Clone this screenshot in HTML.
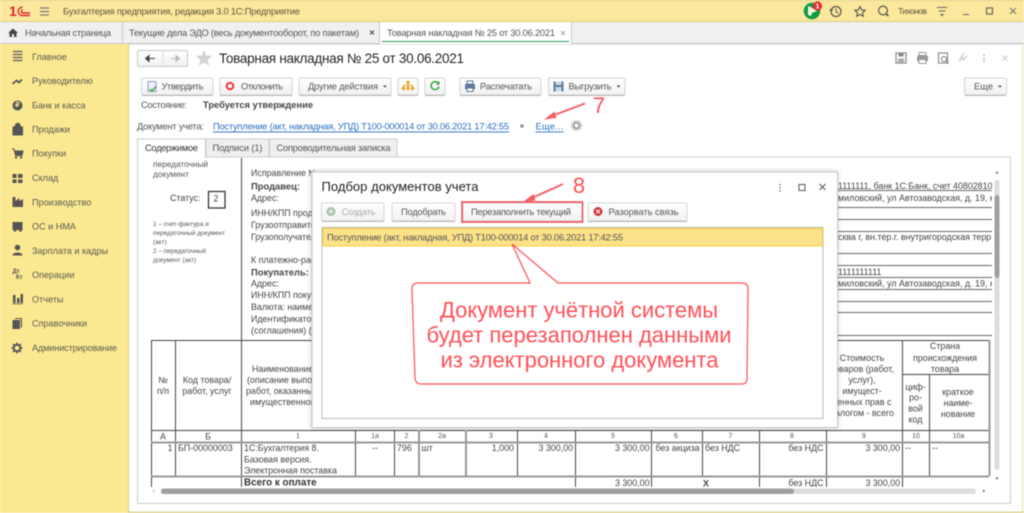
<!DOCTYPE html>
<html><head><meta charset="utf-8"><style>
html,body{margin:0;padding:0;width:1024px;height:513px;overflow:hidden;background:#fff}
body>svg{display:block;filter:blur(.45px)}
text{font-family:"Liberation Sans",sans-serif;font-size:9.3px;fill:#4a4a4a;dominant-baseline:central;white-space:pre}
.s{font-size:9.3px;fill:#555}
.sb{font-size:9.1px;fill:#5a5a50}
.m{text-anchor:middle}.e{text-anchor:end}.b{font-weight:bold}
.d{fill:#444;font-size:8.9px}
.d.b{font-size:9.4px}
.n{font-size:7px;fill:#555;text-anchor:middle}
.sm{font-size:6.4px;fill:#555}
.ln{stroke:#444;stroke-width:1;fill:none}
.g{stroke:#999;stroke-width:2;fill:none}
.ann{fill:#ff5058}
</style></head><body>
<svg width="1024" height="513" viewBox="0 0 1024 513" xmlns="http://www.w3.org/2000/svg">
<defs>
<linearGradient id="bt" x1="0" y1="0" x2="0" y2="1"><stop offset="0" stop-color="#fff"/><stop offset="1" stop-color="#f1f1f1"/></linearGradient>
<filter id="sh" x="-5%" y="-5%" width="110%" height="110%"><feGaussianBlur stdDeviation="2"/></filter>
<clipPath id="rc"><rect x="820" y="170" width="172" height="170"/></clipPath>
</defs>
<!-- top bar -->
<rect width="1024" height="22" fill="#fbe89c"/>
<rect width="1024" height="1" fill="#e0cf7c"/>
<rect y="21" width="1024" height="1" fill="#dccd80"/>
<text x="9" y="11" style="font-size:14px;font-weight:bold;fill:#dc262c">1</text>
<path d="M22.500 7A5 4.500 0 0 0 21 15.500H30M22.500 9.500A3 2.600 0 0 0 22 13H30" fill="none" stroke="#dc262c" stroke-width="1.400"/>
<path d="M40 8h9M40 11.500h9M40 15h9" stroke="#777" stroke-width="1.200"/>
<text x="63" y="11.500" textLength="237" style="fill:#5c5540">Бухгалтерия предприятия, редакция 3.0 1С:Предприятие</text>
<circle cx="812" cy="11" r="8.300" fill="#0f9b45"/>
<path d="M809 6l8 5-5 2-1 3-3-1v-8z" fill="#f4f4d8"/>
<circle cx="817.500" cy="6" r="4.600" fill="#e62a30"/>
<text x="817.500" y="6" class="m b" style="font-size:7.500px;fill:#fff">1</text>
<circle cx="836" cy="11.500" r="5" fill="none" stroke="#555" stroke-width="1.200"/><path d="M836 8.500v3.200l2.300 1.500M829.500 9.500l1.700 1.500 1.500-1.500" fill="none" stroke="#555" stroke-width="1"/>
<path d="M860 6.500l1.600 3.400 3.600.4-2.700 2.400.8 3.600-3.300-1.900-3.300 1.900.8-3.600-2.700-2.400 3.600-.4z" fill="none" stroke="#555" stroke-width="1.100"/>
<circle cx="883" cy="10.500" r="4.400" fill="none" stroke="#555" stroke-width="1.200"/><path d="M886 14l2.500 2" stroke="#555" stroke-width="1.500"/>
<text x="898" y="11" textLength="29" style="font-size:8.500px;fill:#5c5540">Тихонов</text>
<path d="M937 7.500h10M938.500 11h7" stroke="#666" stroke-width="1"/><path d="M940 14h4l-2 2.500z" fill="#666"/>
<path d="M963 14.500h6" stroke="#777" stroke-width="1.200"/>
<rect x="986.500" y="8" width="6" height="6" fill="none" stroke="#666" stroke-width="1.200"/>
<path d="M1010 8l6 6M1016 8l-6 6" stroke="#777" stroke-width="1.100"/>
<!-- tabs -->
<rect y="22" width="1024" height="22" fill="#f0f0f0"/>
<rect y="43" width="1024" height="1.500" fill="#c9c9c9"/>
<path d="M8 33l5-4.500 5 4.500h-1.500v4h-2.500v-3h-2v3h-2.500v-4z" fill="#444"/>
<text x="25" y="33" textLength="86" class="s">Начальная страница</text>
<rect x="122" y="22" width="1" height="22" fill="#c9c9c9"/>
<text x="129" y="33" textLength="230" class="s">Текущие дела ЭДО (весь документооборот, по пакетам)</text>
<path d="M370 30.500l4 4M374 30.500l-4 4" stroke="#555" stroke-width="1.200"/>
<rect x="379" y="22" width="1" height="22" fill="#c9c9c9"/>
<rect x="380" y="22" width="191" height="22" fill="#fff"/>
<text x="387" y="33" textLength="168" class="s">Товарная накладная № 25 от 30.06.2021</text>
<path d="M561 31l4 4M565 31l-4 4" stroke="#aaa" stroke-width="1"/>
<rect x="382" y="41" width="187" height="1" fill="#1f9a5b"/>
<rect x="571" y="22" width="1" height="22" fill="#c9c9c9"/>
<!-- sidebar -->
<rect y="44" width="128.500" height="469" fill="#fbe991"/>
<rect x="128" y="44" width="1" height="469" fill="#dccd80"/>
<path d="M13 51.500h9.500M13 54.500h9.500M13 57.500h9.500M13 60.500h9.500" stroke="#555" stroke-width="1.300"/>
<path d="M12.500 84l4-3.500 2.500 2 3-3" fill="none" stroke="#555" stroke-width="1.800"/>
<circle cx="17.500" cy="105.500" r="5" fill="#555"/><text x="17.500" y="105.500" class="m b" style="font-size:7px;fill:#fbe991">₽</text>
<path d="M13 127h9.500v8h-9.500zM15 127c0-5 5.500-5 5.500 0" fill="#555" stroke="#555"/>
<path d="M12 149h2l1.500 6.500h6.500l1-4.500h-8" fill="#555" stroke="#555"/><circle cx="16" cy="157.500" r="1.200" fill="#555"/><circle cx="21" cy="157.500" r="1.200" fill="#555"/>
<path d="M12.500 174h4v4h-4zM18 174h4.500v4h-4.500zM12.500 179.500h4v3.500h-4zM18 179.500h4.500v3.500h-4.500z" fill="#555"/>
<path d="M12.500 207v-10h3v4l4-3v3l3.500-2v8z" fill="#555"/>
<path d="M12.500 222h10v8h-10zM18 224h4.500" fill="#555"/><circle cx="15" cy="230.500" r="1.300" fill="#555"/><circle cx="20.500" cy="230.500" r="1.300" fill="#555"/>
<circle cx="17.500" cy="247.500" r="2.800" fill="#555"/><path d="M12.500 255.500c0-4 10-4 10 0z" fill="#555"/>
<text x="12.500" y="272" style="font-size:6px;font-weight:bold;fill:#555">Дт</text><text x="16" y="278" style="font-size:6px;font-weight:bold;fill:#555">Кт</text>
<path d="M13 295h2.500v8h-2.500zM17 298h2.500v5h-2.500zM20.500 294h2.500v9h-2.500zM12.500 303.500h10.500v.8h-10.500z" fill="#555"/>
<path d="M12.500 320h7.500v9h-7.500zM15 318h7v9.500h-1.200v-8.500h-5.800z" fill="#555"/>
<circle cx="17" cy="348" r="3.300" fill="none" stroke="#555" stroke-width="2"/><path d="M17 342.500v2M17 351.500v2M11.500 348h2M20.500 348h2M13 344l1.500 1.500M19.500 350.500l1.500 1.500M13 352l1.500-1.500M19.500 345.500l1.500-1.500" stroke="#555" stroke-width="1.500"/>
<text x="32" y="57" class="sb">Главное</text>
<text x="32" y="81" class="sb">Руководителю</text>
<text x="32" y="105.500" class="sb">Банк и касса</text>
<text x="32" y="129.500" class="sb">Продажи</text>
<text x="32" y="153.500" class="sb">Покупки</text>
<text x="32" y="178" class="sb">Склад</text>
<text x="32" y="202.500" class="sb">Производство</text>
<text x="32" y="226.500" class="sb">ОС и НМА</text>
<text x="32" y="251" class="sb">Зарплата и кадры</text>
<text x="32" y="275" class="sb">Операции</text>
<text x="32" y="299.500" class="sb">Отчеты</text>
<text x="32" y="323.500" class="sb">Справочники</text>
<text x="32" y="348" textLength="85" class="sb">Администрирование</text>
<!-- outer edges -->
<rect x="129" y="511.500" width="895" height="1.500" fill="#dcd38f"/>
<rect x="1022" y="44" width="1" height="468" fill="#e6dfa8"/>
<!-- form header -->
<rect x="137.500" y="50.500" width="50" height="16" rx="1.500" fill="url(#bt)" stroke="#c8c8c8"/>
<path d="M163 51v15" stroke="#ddd"/>
<path d="M146 58.500h9M149 55.500l-3.500 3 3.500 3z" fill="#444" stroke="#444"/>
<path d="M171 58.500h8M176 55.500l3.500 3-3.500 3z" fill="#bbb" stroke="#bbb"/>
<path d="M204 50l2.300 5.500 5.800.5-4.400 3.800 1.400 5.700-5.100-3-5.100 3 1.400-5.700-4.400-3.800 5.800-.5z" fill="#d4d4d4"/>
<text x="219" y="58.500" textLength="245" style="font-size:13.500px;fill:#222">Товарная накладная № 25 от 30.06.2021</text>
<rect x="896" y="53" width="10" height="10" fill="none" stroke="#888" stroke-width="1.200"/><rect x="898.500" y="53" width="5" height="3.500" fill="#888"/><rect x="898" y="58.500" width="6" height="4.500" fill="#aaa"/>
<rect x="917" y="55.500" width="11" height="6" rx="1.500" fill="#999"/><rect x="919" y="52.500" width="7" height="3" fill="none" stroke="#999"/><rect x="919" y="59.500" width="7" height="4" fill="#fff" stroke="#999"/>
<rect x="938.500" y="53" width="9" height="10" fill="none" stroke="#888" stroke-width="1.100"/><circle cx="944" cy="59" r="2.500" fill="#fff" stroke="#777"/><path d="M946 61l2.500 2.500" stroke="#777" stroke-width="1.200"/>
<path d="M960 61l3-3M958.500 60.500l2.500-2.500a2 2 0 0 1 2.800 2.800M967.500 55.500l-2.500 2.500a2 2 0 0 1-2.800-2.800l2.500-2.500" fill="none" stroke="#ccc" stroke-width="1.100"/>
<path d="M984 54.500v1.500M984 57.500v1.500M984 60.500v1.500" stroke="#aaa" stroke-width="1.500"/>
<path d="M1002.500 55.500l5 5M1007.500 55.500l-5 5" stroke="#ccc"/>
<!-- toolbar -->
<g fill="url(#bt)" stroke="#d4d4d4">
<rect x="141.500" y="78" width="71.500" height="17" rx="1.500"/>
<rect x="220" y="78" width="72" height="17" rx="1.500"/>
<rect x="299" y="78" width="92" height="17" rx="1.500"/>
<rect x="398" y="78" width="20" height="17" rx="1.500"/>
<rect x="425" y="78" width="20" height="17" rx="1.500"/>
<rect x="460" y="78" width="81" height="17" rx="1.500"/>
<rect x="548.500" y="78" width="76.500" height="17" rx="1.500"/>
<rect x="964.500" y="78" width="42" height="17" rx="1.500"/>
</g>
<path d="M142 95.500h71M220 95.500h72M299 95.500h92M398 95.500h20M425 95.500h20M460 95.500h81M549 95.500h76M965 95.500h41" stroke="#b4b4b4"/>
<rect x="148" y="81.500" width="8" height="10" fill="#eef" stroke="#8ca0b8"/><path d="M150 89l2 2 4-4.500" fill="none" stroke="#3aaa45" stroke-width="1.500"/>
<text x="161.500" y="86.500" textLength="42" class="s">Утвердить</text>
<circle cx="230" cy="86" r="3.300" fill="none" stroke="#e33" stroke-width="2"/>
<text x="241" y="86.500" textLength="42" class="s">Отклонить</text>
<text x="308" y="86.500" textLength="70" class="s">Другие действия</text>
<path d="M383 85.500h4l-2 2.200z" fill="#555"/>
<path d="M406.500 81h3v3h-3zM402 87h3v3h-3zM406.500 87h3v3h-3zM411 87h3v3h-3z" fill="#e8a020"/><path d="M403.500 87v-1.500h9v1.500M408 84v3" fill="none" stroke="#e8a020"/>
<path d="M438.500 83.500a4 4 0 1 0 .5 3" fill="none" stroke="#3aa33e" stroke-width="1.500"/><path d="M439.500 81v3.800h-3.800z" fill="#3aa33e"/>
<rect x="465" y="84" width="10" height="5.500" rx="1" fill="#5d7a98"/><rect x="467" y="81" width="6" height="3" fill="none" stroke="#5d7a98"/><rect x="467" y="88" width="6" height="3.500" fill="#fff" stroke="#5d7a98"/>
<text x="480" y="86.500" textLength="52" class="s">Распечатать</text>
<rect x="553.500" y="81.500" width="10" height="10" fill="#5d7a98"/><rect x="555.500" y="81.500" width="6" height="3.500" fill="#cdd8e2"/><rect x="555.500" y="87" width="6" height="4.500" fill="#cdd8e2"/>
<text x="568.500" y="86.500" textLength="43" class="s">Выгрузить</text>
<path d="M616.500 85.500h4l-2 2.200z" fill="#555"/>
<text x="974" y="86.500" textLength="19" class="s">Еще</text>
<path d="M998 85.500h4l-2 2.200z" fill="#555"/>
<text x="141" y="105" textLength="46" class="s">Состояние:</text>
<text x="203" y="105" textLength="110" class="b" style="fill:#444">Требуется утверждение</text>
<text x="137" y="126.500" textLength="67" class="s">Документ учета:</text>
<text x="213" y="126.500" textLength="296" text-decoration="underline" style="fill:#2b6fc2">Поступление (акт, накладная, УПД) Т100-000014 от 30.06.2021 17:42:55</text>
<path d="M520.500 124.500l3 3M523.500 124.500l-3 3" stroke="#666"/>
<text x="535.500" y="126.500" textLength="28" text-decoration="underline" style="fill:#2b6fc2">Еще...</text>
<circle cx="576.500" cy="125.500" r="3" fill="none" stroke="#888" stroke-width="1.600"/><circle cx="576.500" cy="125.500" r="5" fill="none" stroke="#999" stroke-width="1" stroke-dasharray="1.500 1.200"/>
<!-- form tabs -->
<rect x="137.500" y="157" width="873" height="346.500" fill="#fff" stroke="#ccc"/>
<rect x="206" y="139" width="63" height="18" fill="#efefef" stroke="#ccc"/>
<rect x="269.500" y="139" width="127.500" height="18" fill="#efefef" stroke="#ccc"/>
<path d="M137.500 157v-18h68v18" fill="#fff" stroke="#ccc"/>
<rect x="138" y="156" width="67" height="2" fill="#fff"/>
<text x="145" y="148" textLength="53" class="s" style="fill:#333">Содержимое</text>
<text x="212.500" y="148" textLength="50" class="s">Подписи (1)</text>
<text x="276.500" y="148" textLength="114" class="s">Сопроводительная записка</text>
<!-- document content -->
<text x="153" y="164" style="font-size:8.300px;fill:#555">передаточный</text>
<rect x="138" y="158" width="100" height="3" fill="#fff"/>
<text x="153" y="174" style="font-size:8.300px;fill:#555">документ</text>
<text x="170" y="198" class="d">Статус:</text>
<rect x="208.500" y="191.500" width="16.500" height="16.500" fill="none" stroke="#333" stroke-width="1.300"/>
<text x="216" y="198.500" class="d m">2</text>
<text x="153" y="224.500" class="sm">1 – счет-фактура и</text>
<text x="153" y="233.500" class="sm">передаточный документ</text>
<text x="153" y="242.500" class="sm">(акт)</text>
<text x="153" y="251.500" class="sm">2 – передаточный</text>
<text x="153" y="260.500" class="sm">документ (акт)</text>
<path class="ln" d="M241.500 158v329"/>
<text x="251" y="173" class="d">Исправление №</text>
<text x="251" y="186" class="d b">Продавец:</text>
<text x="251" y="198" class="d">Адрес:</text>
<text x="251" y="213" class="d">ИНН/КПП продавца</text>
<text x="251" y="225" class="d">Грузоотправитель</text>
<text x="251" y="237" class="d">Грузополучатель</text>
<text x="251" y="260" class="d">К платежно-расчетному</text>
<text x="251" y="272" class="d b">Покупатель:</text>
<text x="251" y="283.500" class="d">Адрес:</text>
<text x="251" y="295" class="d">ИНН/КПП покупателя</text>
<text x="251" y="307" class="d">Валюта: наименование</text>
<text x="251" y="319" class="d">Идентификатор</text>
<text x="251" y="330.500" class="d">(соглашения) (</text>
<path d="M830 190.500h162M830 207.500h162M830 219.500h162M830 231.500h162M830 253.500h162M830 265.500h162M830 277.500h162M830 289.500h162M830 301.500h162M830 312.500h162M830 335.500h162" stroke="#666"/>
<g clip-path="url(#rc)">
<text x="838" y="186" class="d">1111111, банк 1С:Банк, счет 40802810 1</text>
<text x="838" y="198" class="d">миловский, ул Автозаводская, д. 19, к</text>
<text x="838" y="237" class="d">сква г, вн.тер.г. внутригородская терр</text>
<text x="838" y="272" class="d">1111111111</text>
<text x="838" y="283.500" class="d">миловский, ул Автозаводская, д. 19, к</text>
</g>
<!-- table -->
<path class="ln" d="M151.500 340.500h838M151.500 430.500h838M902.500 374.500h87"/>
<path class="ln" d="M151.500 340v147M175.500 340v136M355.500 430v46M394.500 430v46M517.500 430v46M575.500 430v57M651.500 430v57M702.500 430v46M759.500 430v57M826.500 430v57M902.500 340v147M929.500 374v102"/>
<path class="g" d="M151 442.500h838M151 476.500h838M419 430v46M466 430v46M989.500 340v136"/>
<text x="163" y="380" class="d m">№</text><text x="163" y="391" class="d m">п/п</text>
<text x="207" y="380" class="d m">Код товара/</text><text x="207" y="391" class="d m">работ, услуг</text>
<text x="252" y="369" class="d">Наименование</text>
<text x="247" y="380" class="d">(описание выполненных</text>
<text x="246" y="391" class="d">работ, оказанных услуг)</text>
<text x="250" y="402" class="d">имущественного</text>
<text x="862" y="358" class="d m">Стоимость</text>
<text x="862" y="369" class="d m">товаров (работ,</text>
<text x="862" y="380" class="d m">услуг),</text>
<text x="862" y="391" class="d m">имущест-</text>
<text x="862" y="402" class="d m">венных прав с</text>
<text x="862" y="413" class="d m">налогом - всего</text>
<text x="945" y="346" class="d m">Страна</text>
<text x="945" y="358" class="d m">происхождения</text>
<text x="945" y="369" class="d m">товара</text>
<text x="915.500" y="387" class="d m">циф-</text><text x="915.500" y="397.500" class="d m">ро-</text><text x="915.500" y="408.500" class="d m">вой</text><text x="915.500" y="419.500" class="d m">код</text>
<text x="958" y="392" class="d m">краткое</text><text x="958" y="403" class="d m">наиме-</text><text x="958" y="414" class="d m">нование</text>
<text x="163" y="436.500" class="d m">А</text><text x="208" y="436.500" class="d m">Б</text>
<text x="298" y="436.500" class="n">1</text><text x="375" y="436.500" class="n">1а</text><text x="406.500" y="436.500" class="n">2</text><text x="442" y="436.500" class="n">2а</text><text x="491" y="436.500" class="n">3</text><text x="546" y="436.500" class="n">4</text><text x="613" y="436.500" class="n">5</text><text x="676" y="436.500" class="n">6</text><text x="730.500" y="436.500" class="n">7</text><text x="792" y="436.500" class="n">8</text><text x="864" y="436.500" class="n">9</text><text x="916" y="436.500" class="n">10</text><text x="958.500" y="436.500" class="n">10а</text>
<text x="172.500" y="448" class="d e">1</text>
<text x="178" y="448" class="d">БП-00000003</text>
<text x="244" y="448" class="d">1С:Бухгалтерия 8.</text>
<text x="244" y="459.500" class="d">Базовая версия.</text>
<text x="244" y="470.500" class="d">Электронная поставка</text>
<text x="375" y="448" class="d m">--</text>
<text x="397" y="448" class="d">796</text>
<text x="421.500" y="448" class="d">шт</text>
<text x="514" y="448" class="d e">1,000</text>
<text x="573" y="448" class="d e">3 300,00</text>
<text x="649.500" y="448" class="d e">3 300,00</text>
<text x="655.500" y="448" class="d">без акциза</text>
<text x="705" y="448" class="d">без НДС</text>
<text x="823.500" y="448" class="d e">без НДС</text>
<text x="900" y="448" class="d e">3 300,00</text>
<text x="905" y="448" class="d">--</text>
<text x="932" y="448" class="d">--</text>
<text x="244" y="483" class="d b" style="fill:#333;font-size:9.900px">Всего к оплате</text>
<text x="649.500" y="483" class="d e">3 300,00</text>
<text x="706" y="483" class="d m b">Х</text>
<text x="823.500" y="483" class="d e">без НДС</text>
<text x="900" y="483" class="d e">3 300,00</text>
<!-- scrollbars -->
<rect x="138" y="487" width="856" height="9" fill="#fff"/>
<rect x="994.500" y="180" width="5" height="290" rx="2.500" fill="#dcdcdc"/>
<rect x="994.500" y="195" width="5" height="83" rx="2.500" fill="#a0a0a0"/>
<path d="M995.500 173.500h3l-1.500-2.200zM995.500 477.500h3l-1.500 2.200z" fill="#555"/>
<rect x="161" y="488.500" width="815" height="5.500" rx="2.700" fill="#dcdcdc"/>
<rect x="161" y="488.500" width="633" height="5.500" rx="2.700" fill="#a0a0a0"/>
<path d="M154.500 489.500v3l-2.200-1.500z" fill="#bbb"/><path d="M983 489.500v3l2.200-1.500z" fill="#555"/>
<!-- dialog -->
<rect x="311" y="171" width="527" height="258" fill="#000" opacity=".2" filter="url(#sh)"/>
<rect x="312" y="172" width="525.500" height="255.500" fill="#fff" stroke="#c8c8c8"/>
<text x="321.500" y="186.500" textLength="157" style="font-size:13px;fill:#222">Подбор документов учета</text>
<path d="M780 184v1.500M780 187v1.500M780 190v1.500" stroke="#666" stroke-width="1.200"/>
<rect x="799" y="184.500" width="6" height="6" fill="none" stroke="#555"/>
<path d="M819.500 184l6 6M825.500 184l-6 6" stroke="#555"/>
<g fill="url(#bt)" stroke="#d4d4d4">
<rect x="321.500" y="203" width="62.500" height="18" rx="1.500"/>
<rect x="392" y="203" width="63" height="18" rx="1.500"/>
<rect x="463" y="203" width="119.500" height="18" rx="1.500"/>
<rect x="588" y="203" width="99" height="18" rx="1.500"/>
</g>
<path d="M322 221.500h62M392 221.500h63M588 221.500h99" stroke="#b4b4b4"/>
<circle cx="331" cy="211.500" r="4.500" fill="#a9c0a9"/><path d="M331 209v5M328.500 211.500h5" stroke="#fff"/>
<text x="341.500" y="212" textLength="34" style="fill:#aaa">Создать</text>
<text x="401" y="212" textLength="45" class="s">Подобрать</text>
<text x="471" y="212" textLength="100" class="s">Перезаполнить текущий</text>
<rect x="462" y="202" width="120.500" height="20" fill="none" stroke="#f0474f" stroke-width="1.500"/>
<circle cx="598" cy="211.500" r="4.500" fill="#d5303a"/><path d="M596 209.500l4 4M600 209.500l-4 4" stroke="#fff"/>
<text x="608.500" y="212" textLength="70" class="s">Разорвать связь</text>
<rect x="322" y="227.500" width="501" height="191" fill="#fff" stroke="#bbb"/>
<rect x="323" y="228.500" width="499.500" height="17.500" fill="#fde289" stroke="#fbcf3f"/>
<text x="327" y="237.500" textLength="296" class="s" style="fill:#555">Поступление (акт, накладная, УПД) Т100-000014 от 30.06.2021 17:42:55</text>
<!-- annotation callout -->
<path d="M512 244L530 283H418Q412 283 412 289L415 378Q415.500 384 421 384H742Q747 384 747 378L748 289Q748 283 742 283H558Z" fill="#fff" stroke="#ff5058" stroke-width="1.200"/>
<text x="579" y="310" class="m ann" textLength="278" style="font-size:22px">Документ учётной системы</text>
<text x="579" y="335" class="m ann" textLength="305" style="font-size:22px">будет перезаполнен данными</text>
<text x="579.500" y="360" class="m ann" textLength="278" style="font-size:22px">из электронного документа</text>
<!-- arrows -->
<path d="M585 103.500L553 115.500" stroke="#f46065" stroke-width="2"/><path d="M544 119.500l10.500-8 2 6.500z" fill="#f46065"/>
<path d="M563 184L532 198" stroke="#f46065" stroke-width="2"/><path d="M523 202l10.500-8 2 6.500z" fill="#f46065"/>
<text x="599" y="105.500" class="m ann" style="font-size:22px">7</text>
<text x="579" y="185.500" class="m ann" style="font-size:22px">8</text>
</svg>
</body></html>
